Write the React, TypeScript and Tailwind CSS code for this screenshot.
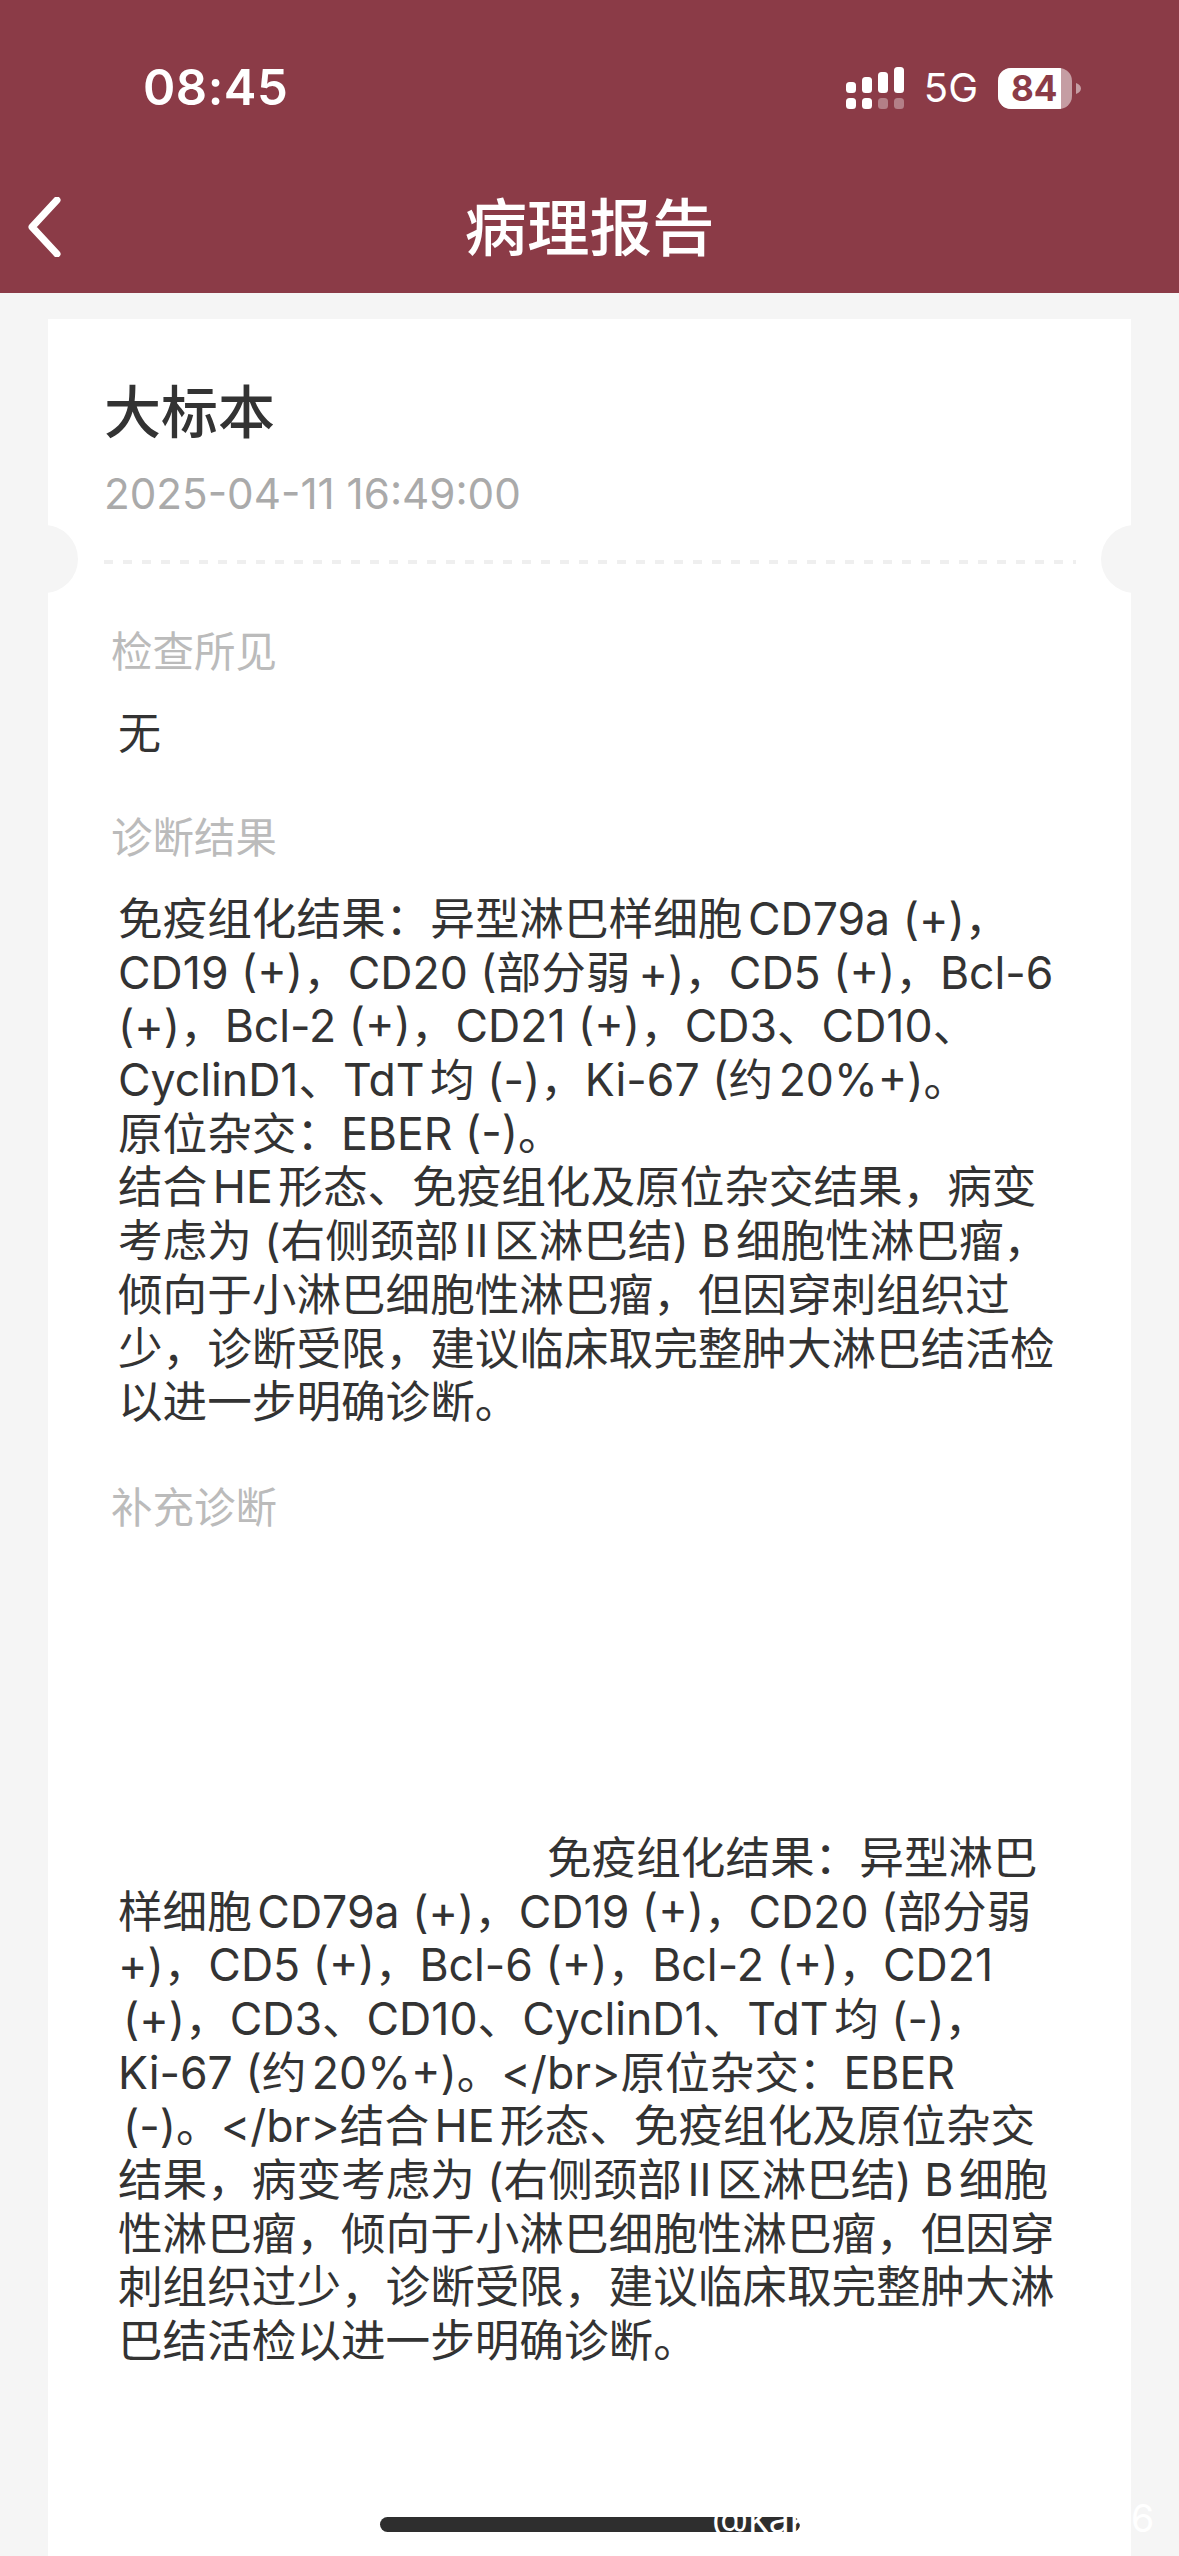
const font = { fontFamily: '"Inter","Noto Sans CJK SC",sans-serif' };

const block1 = [
  "免疫组化结果：异型淋巴样细胞CD79a (+)，",
  "CD19 (+)，CD20 (部分弱\u2009+)，CD5 (+)，Bcl-6",
  "(+)，Bcl-2 (+)，CD21 (+)，CD3、CD10、",
  "CyclinD1、TdT均 (-)，Ki-67 (约20%+)。",
  "原位杂交：EBER (-)。",
  "结合HE形态、免疫组化及原位杂交结果，病变",
  "考虑为 (右侧颈部II区淋巴结) B细胞性淋巴瘤，",
  "倾向于小淋巴细胞性淋巴瘤，但因穿刺组织过",
  "少，诊断受限，建议临床取完整肿大淋巴结活检",
  "以进一步明确诊断。",
];
const block2 = [
  { t: "样细胞CD79a (+)，CD19 (+)，CD20 (部分弱", c: "" },
  { t: "+)，CD5 (+)，Bcl-6 (+)，Bcl-2 (+)，CD21", c: "" },
  { t: "(+)，CD3、CD10、CyclinD1、TdT均 (-)，", c: "pl-[5px]" },
  { t: "Ki-67 (约20%+)。</br>原位杂交：EBER", c: "" },
  { t: "(-)。</br>结合HE形态、免疫组化及原位杂交", c: "pl-[5px]" },
  { t: "结果，病变考虑为 (右侧颈部II区淋巴结) B细胞", c: "" },
  { t: "性淋巴瘤，倾向于小淋巴细胞性淋巴瘤，但因穿", c: "" },
  { t: "刺组织过少，诊断受限，建议临床取完整肿大淋", c: "" },
  { t: "巴结活检以进一步明确诊断。", c: "" },
];

function Line({ children, className = "" }: { children: React.ReactNode; className?: string }) {
  return <div className={`h-[53.7px] leading-[53.7px] whitespace-nowrap ${className}`}>{children}</div>;
}

function Signal() {
  const top = [
    [0, 15, 11],
    [16, 10, 16],
    [32, 5, 21],
    [48, 0, 26],
  ];
  return (
    <svg width="58" height="42" viewBox="0 0 58 42" fill="#fff">
      {top.map(([x, y, h]) => (
        <rect key={x} x={x} y={y} width="10" height={h} rx="3.5" />
      ))}
      <rect x="0" y="31" width="10" height="11" rx="3.5" />
      <rect x="16" y="31" width="10" height="11" rx="3.5" />
      <rect x="32" y="31" width="10" height="11" rx="3.5" opacity="0.35" />
      <rect x="48" y="31" width="10" height="11" rx="3.5" opacity="0.35" />
    </svg>
  );
}

function Battery() {
  return (
    <div className="flex items-center gap-[4px]">
      <div className="relative h-[41px] w-[74px] overflow-hidden rounded-[13px] bg-white/50">
        <div className="h-full w-[63px] bg-white" />
        <span className="absolute left-[13px] top-0 text-[35px] font-bold leading-[41px] text-[#8b3b47]">84</span>
      </div>
      <svg width="5" height="11" viewBox="0 0 5 11">
        <path d="M0 0 C3 1 5 3 5 5.5 C5 8 3 10 0 11 Z" fill="#fff" fillOpacity="0.5" />
      </svg>
    </div>
  );
}

export default function App() {
  return (
    <div className="flex h-[2556px] w-[1179px] flex-col overflow-hidden bg-[#f5f5f5] [text-autospace:normal]" style={font}>
      <header className="h-[293px] shrink-0 bg-[#8b3b47] text-white">
        <div className="flex h-[192px] items-start justify-between pl-[143px] pr-[98px] pt-[61px]">
          <span className="text-[49px] font-semibold leading-[54px] tracking-[0.5px]">08:45</span>
          <div className="flex items-center gap-[20px] pt-[6px]">
            <Signal />
            <span className="text-[40px] leading-[42px]">5G</span>
            <Battery />
          </div>
        </div>
        <div className="relative flex h-[72px] items-center justify-center">
          <svg className="absolute left-[26px] top-[5px]" width="36" height="60" viewBox="0 0 36 60" fill="none">
            <path d="M31 3 L6 30 L31 57" stroke="#fff" strokeWidth="7" strokeLinecap="round" strokeLinejoin="round" />
          </svg>
          <h1 className="text-[62.5px] font-medium leading-[72px]">病理报告</h1>
        </div>
      </header>

      <main className="flex-1 overflow-hidden px-[48px] pt-[26px]">
        <section className="relative h-full overflow-hidden bg-white pl-[56px] text-[#333]">
          <div className="absolute -left-[38px] top-[206px] h-[68px] w-[68px] rounded-full bg-[#f5f5f5]" />
          <div className="absolute -right-[38px] top-[206px] h-[68px] w-[68px] rounded-full bg-[#f5f5f5]" />

          <div className="h-[241px] pt-[64px]">
            <h2 className="text-[57px] font-medium leading-[60px] text-[#333]">大标本</h2>
            <p className="mt-[26px] text-[42.2px] leading-[50px] text-[#aaa]">2025-04-11 16:49:00</p>
          </div>
          <div className="mr-[55px] h-[4px] bg-[repeating-linear-gradient(90deg,#efefef_0_9px,transparent_9px_19px)]" />

          <div className="pl-[7px]">
            <p className="mt-[63px] text-[41.5px] leading-[50px] text-[#bbb]">检查所见</p>
            <p className="mt-[31px] pl-[7px] text-[43px] leading-[50px]">无</p>
            <p className="mt-[55px] text-[41.5px] leading-[50px] text-[#bbb]">诊断结果</p>
            <div className="mt-[30px] pl-[7px] text-[44.6px]">
              {block1.map((t) => (
                <Line key={t}>{t}</Line>
              ))}
            </div>
            <p className="mt-[53px] text-[41.5px] leading-[50px] text-[#bbb]">补充诊断</p>
            <div className="mt-[299px] pl-[7px] text-[44.6px]">
              <Line className="pl-[429px]">免疫组化结果：异型淋巴</Line>
              {block2.map(({ t, c }) => (
                <Line key={t} className={c}>
                  {t}
                </Line>
              ))}
            </div>
          </div>
        </section>
      </main>

      <div className="absolute left-[380px] top-[2517px] h-[15px] w-[420px] rounded-[8px] bg-[#2e2e2e]" />
      <span className="absolute left-[712px] top-[2494px] text-[37.5px] leading-[50px] text-white">@kakikun_in_house6086</span>
    </div>
  );
}
